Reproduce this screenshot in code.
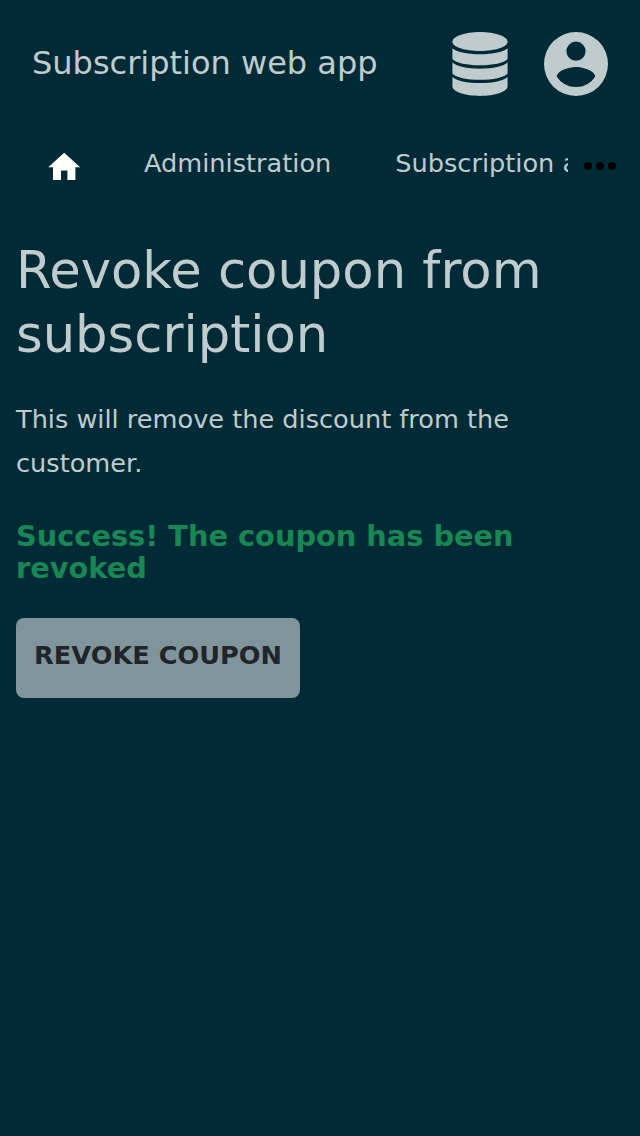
<main>
  <header>
    <div class="brand">Subscription web app</div>
    <svg class="database" width="56" height="64" viewBox="0 0 56 64" aria-hidden="true">
      <path d="M28 0C43 0 55.6 4.5 55.6 9.7S43 18.9 28 18.9.4 14.9.4 9.7 13 0 28 0z"/>
      <path d="M.4 16.2C4 19.8 15 22.2 28 22.2s24-2.4 27.6-6v11.1C52 31 41 33.3 28 33.3S4 31 .4 27.3z"/>
      <path d="M.4 30.6C4 34.3 15 36.7 28 36.7s24-2.4 27.6-6.1v11.1C52 45.4 41 47.8 28 47.8S4 45.4.4 41.7z"/>
      <path d="M.4 45C4 48.7 15 51.1 28 51.1s24-2.4 27.6-6.1v9.6C55 60 43 64 28 64S1 60 .4 54.6z"/>
    </svg>
    <svg class="account" width="64" height="64" viewBox="0 0 64 64" aria-hidden="true"><path fill-rule="evenodd" d="M32 0a32 32 0 1 0 0 64 32 32 0 0 0 0-64zm0 9.6a9.6 9.6 0 1 1 0 19.2 9.6 9.6 0 0 1 0-19.2zm0 45.4a23 23 0 0 1-19.2-10.3C12.9 38.4 25.6 35 32 35s19.1 3.4 19.2 9.7A23 23 0 0 1 32 55z"/></svg>
  </header>
  <nav>
    <div class="items">
      <svg class="home" width="38.4" height="38.4" viewBox="0 0 24 24" aria-label="Home"><path d="M10 20v-6h4v6h5v-8h3L12 3 2 12h3v8z"/></svg>
      <span>Administration</span><span>Subscription administration</span>
    </div>
    <svg class="more" width="32" height="8" viewBox="0 0 32 8" aria-label="More"><circle cx="4" cy="4" r="4"/><circle cx="16" cy="4" r="4"/><circle cx="28" cy="4" r="4"/></svg>
  </nav>
  <section>
    <h1>Revoke coupon from subscription</h1>
    <p>This will remove the discount from the customer.</p>
    <h2>Success! The coupon has been revoked</h2>
    <button>REVOKE COUPON</button>
  </section>
</main>

<style>
  :global(body) { margin: 0; background: #002b36; }
  main { min-height: 1136px; background: #002b36; color: #c0cbce; font-family: "DejaVu Sans", sans-serif; }
  header { height: 128px; display: flex; align-items: center; padding: 0 32px; box-sizing: border-box; }
  .brand { flex: 1; font-size: 32px; line-height: 38px; padding-bottom: 2px; }
  header svg { fill: #c0cbce; flex: none; }
  .account { margin-left: 36px; }
  nav { height: 72px; display: flex; align-items: center; }
  .items { width: 568px; height: 72px; overflow: hidden; display: flex; align-items: center; white-space: nowrap; font-size: 25.6px; }
  .items span { flex: none; margin-right: 64px; line-height: 30px; padding-bottom: 2px; }
  .home { flex: none; fill: #fff; margin: 6px 60.8px 0 44.8px; }
  .more { margin-left: 16px; margin-top: 4px; }
  section { padding: 38px 16px 0; }
  h1 { margin: 0; font-size: 51.2px; line-height: 64px; font-weight: 400; }
  p { margin: 31px 0 0; font-size: 25.6px; line-height: 44px; }
  h2 { margin: 35px 0 0; font-size: 28.8px; line-height: 32px; color: #198754; }
  button { display: block; margin-top: 34px; width: 284px; height: 80px; border: 0; border-radius: 8px; padding: 0 0 6px; background: #80959b; color: #212529; font: 700 25.6px "DejaVu Sans", sans-serif; }
</style>
